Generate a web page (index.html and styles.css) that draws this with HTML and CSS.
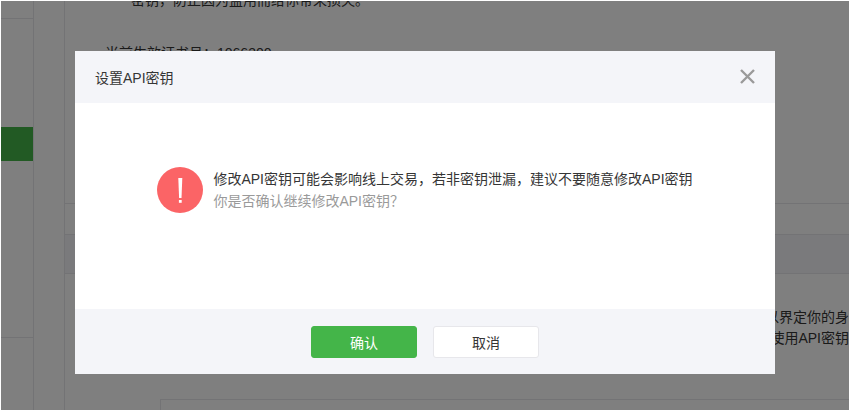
FILE: index.html
```html
<!DOCTYPE html>
<html lang="zh-CN">
<head>
  <meta charset="UTF-8" />
  <title>设置API密钥</title>
  <link rel="stylesheet" href="styles.css">
</head>
<body>
  <div class="page">
    <div class="sidebar">
      <div class="side-top"></div>
      <div class="side-active"></div>
      <div class="side-rule"></div>
    </div>
    <div class="rail"></div>

    <div class="main">
      <div class="card">
        <p class="card-note">密钥，防止因为盗用而给你带来损失。</p>
        <p class="card-cert">当前生效证书号：1066300</p>
      </div>
      <div class="section-head"></div>
      <div class="section-text">
        <p>可以界定你的身</p>
        <p>使用API密钥</p>
      </div>
      <div class="section-box"></div>
    </div>

    <div class="overlay">
      <div class="dialog">
        <div class="dialog-head">
          <span class="dialog-title">设置API密钥</span>
          <svg class="dialog-close" width="15" height="15" viewBox="0 0 15 15">
            <path d="M1 1 L14 14 M14 1 L1 14" stroke="#9a9a9a" stroke-width="2.4" fill="none" />
          </svg>
        </div>

        <div class="dialog-body">
          <svg class="warn-icon" width="46" height="46" viewBox="0 0 46 46">
            <circle cx="23" cy="23" r="23" fill="#fb6466" />
            <path d="M21.3 11 H25.3 L24.5 31 H22.1 Z" fill="#fff" />
            <rect x="21.9" y="33" width="2.8" height="2.8" fill="#fff" />
          </svg>
          <div class="warn-text">
            <p class="warn-main">修改API密钥可能会影响线上交易，若非密钥泄漏，建议不要随意修改API密钥</p>
            <p class="warn-sub">你是否确认继续修改API密钥？</p>
          </div>
        </div>

        <div class="dialog-foot">
          <button class="btn btn-primary">确认</button>
          <button class="btn btn-default">取消</button>
        </div>
      </div>
    </div>
  </div>
</body>
</html>
```

FILE: styles.css
```css
* {
  box-sizing: border-box;
}

html, body {
  margin: 0;
  padding: 0;
  background: #fff;
  overflow: hidden;
}

body {
  font-family: "Liberation Sans", "Noto Sans CJK SC", sans-serif;
  font-size: 14px;
  color: #353535;
}

p {
  margin: 0;
}

.page {
  position: relative;
  display: flex;
  height: 409px;
  margin: 1px;
  overflow: hidden;
}

/* page behind the overlay */
.sidebar {
  width: 33px;
  flex: none;
  border-right: 1px solid #e7e7eb;
}

.side-top {
  height: 18px;
  border-bottom: 1px solid #e7e7eb;
}

.side-active {
  height: 34px;
  margin-top: 108px;
  background: #44b549;
}

.side-rule {
  margin-top: 176px;
  border-top: 1px solid #e7e7eb;
}

.rail {
  width: 30px;
  flex: none;
}

.main {
  flex: 1;
  min-width: 0;
  border-left: 1px solid #e7e7eb;
}

.card {
  display: flow-root;
  height: 203px;
  border-bottom: 1px solid #e7e7eb;
  line-height: 20px;
}

.card-note {
  margin-top: -11px;
  padding-left: 66px;
}

.card-cert {
  margin-top: 33px;
  padding-left: 40px;
}

.section-head {
  height: 40px;
  margin-top: 30px;
  background: #f4f5f9;
  border-top: 1px solid #e7e7eb;
  border-bottom: 1px solid #e7e7eb;
}

.section-text {
  margin-top: 33px;
  line-height: 21px;
  text-align: right;
  white-space: nowrap;
}

.section-box {
  height: 40px;
  margin-top: 50px;
  margin-left: 95px;
  border-top: 1px solid #e7e7eb;
  border-left: 1px solid #e7e7eb;
}

/* dialog */
.overlay {
  position: absolute;
  top: 0;
  right: 0;
  bottom: 0;
  left: 0;
  display: flex;
  justify-content: center;
  align-items: flex-start;
  padding-top: 50px;
  background: rgba(0, 0, 0, 0.5);
}

.dialog {
  width: 700px;
  background: #fff;
}

.dialog-head {
  display: flex;
  justify-content: space-between;
  align-items: center;
  height: 52px;
  padding: 0 20px;
  background: #f4f5f9;
}

.dialog-title {
  color: #353535;
}

.dialog-close {
  display: block;
  margin-top: -2px;
}

.dialog-body {
  display: flex;
  justify-content: center;
  align-items: flex-start;
  gap: 10px;
  height: 206px;
  padding-top: 64px;
}

.warn-icon {
  display: block;
  flex: none;
}

.warn-text {
  margin-top: 1px;
  line-height: 22px;
}

.warn-sub {
  color: #9a9a9a;
}

.dialog-foot {
  display: flex;
  justify-content: center;
  gap: 16px;
  height: 65px;
  padding-top: 17px;
  background: #f4f5f9;
}

.btn {
  width: 106px;
  height: 32px;
  padding: 0;
  border-radius: 3px;
  font-family: inherit;
  font-size: 14px;
}

.btn-primary {
  background: #44b549;
  border: 1px solid #44b549;
  color: #fff;
}

.btn-default {
  background: #fff;
  border: 1px solid #e7e7eb;
  color: #353535;
}
```
